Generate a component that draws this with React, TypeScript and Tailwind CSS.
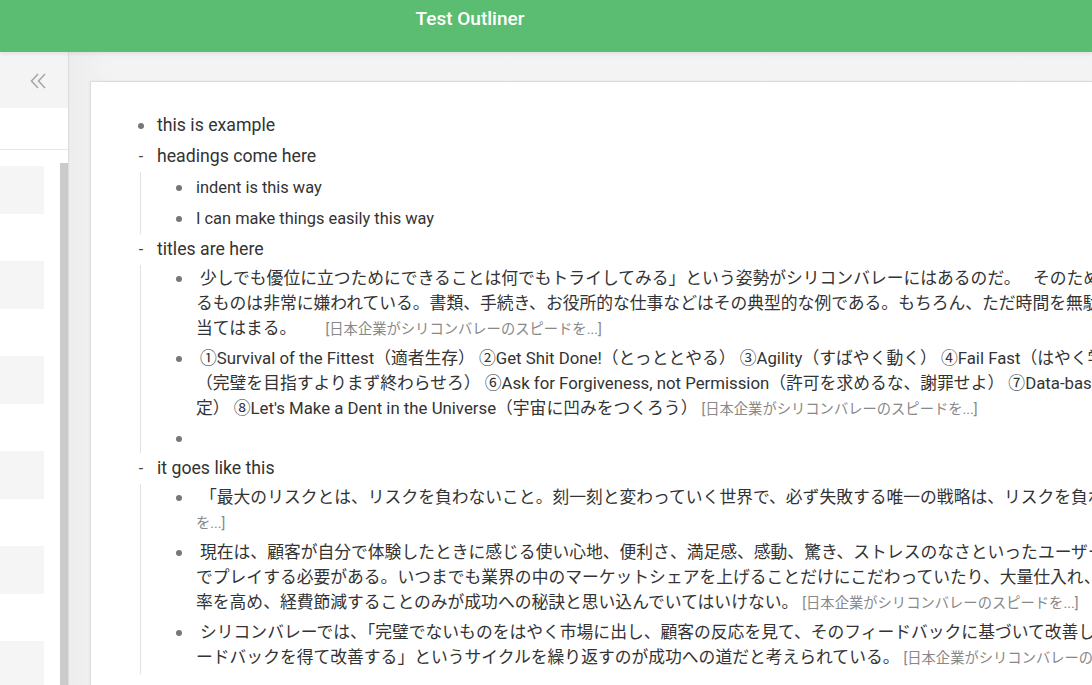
import React from "react";

const font = "font-['Roboto','Noto_Sans_CJK_JP',sans-serif]";

const Source = ({ children }: { children: React.ReactNode }) => (
  <span className="ml-[4px] text-[14.3px] leading-none text-[#888]">{children}</span>
);

const Dot = () => (
  <span className="w-[18px] h-[25px] flex items-center justify-center shrink-0">
    <span className="w-[6px] h-[6px] rounded-full bg-[#777]" />
  </span>
);

const Dash = () => (
  <span className="w-[18px] h-[25px] flex items-center justify-center shrink-0 text-[16px] text-[#444]">
    -
  </span>
);

const Top = ({ dash, text }: { dash?: boolean; text: string }) => (
  <div className="flex py-[3px]">
    {dash ? <Dash /> : <Dot />}
    <div className="ml-[7px] text-[17.7px] leading-[25px] text-[#333]">{text}</div>
  </div>
);

const Child = ({ children, jp }: { children?: React.ReactNode; jp?: boolean }) => {
  // empty item is a bit shorter than one with text
  const pad = jp ? "pt-[1px] pb-[4px]" : children ? "py-[3px]" : "py-[1.5px]";
  return (
    <div className={`flex ${pad}`}>
      <Dot />
      <div
        className={`ml-[8px] leading-[25px] text-[#333] whitespace-nowrap ${
          jp ? "text-[16.8px] indent-[4px]" : "text-[16.4px]"
        }`}
      >
        {children}
      </div>
    </div>
  );
};

const Group = ({ children }: { children: React.ReactNode }) => (
  <div className="ml-[8px] pl-[29px] border-l border-[#e2e2e2]">{children}</div>
);

export default function App() {
  return (
    <div className={`${font} w-screen h-screen overflow-hidden flex flex-col bg-[#f2f2f2]`}>
      {/* Header */}
      <header className="h-[52px] shrink-0 bg-[#5bbd71] flex justify-center pr-[152px] relative z-10 shadow-[0_2px_4px_rgba(0,0,0,0.08)]">
        <h1 className="text-white text-[19px] font-medium leading-[38px]">Test Outliner</h1>
      </header>

      <div className="flex flex-1 min-h-0">
        {/* Sidebar */}
        <aside className="w-[69px] shrink-0 bg-white border-r border-[#dcdcdc] flex flex-col">
          <div className="h-[56px] shrink-0 bg-[#f4f4f4] flex items-center justify-end pr-[22px] pt-[2px]">
            <svg width="16" height="18" viewBox="0 0 16 18" fill="none" stroke="#a8a8a8" strokeWidth="1.6">
              <polyline points="8,2 1.5,9 8,16" />
              <polyline points="15,2 8.5,9 15,16" />
            </svg>
          </div>
          <div className="h-[42px] shrink-0 border-b border-[#e6e6e6]" />
          <div className="flex-1 flex pt-[13px]">
            <div className="w-[44px] flex flex-col gap-[47px] pt-[3px]">
              {[0, 1, 2, 3, 4, 5].map((i) => (
                <div key={i} className="h-[48px] shrink-0 bg-[#f5f5f5]" />
              ))}
            </div>
            <div className="ml-auto w-[8px] bg-[#cbcbcb]" />
          </div>
        </aside>

        {/* Main */}
        <main className="flex-1 min-w-0 pl-[21px] pt-[29px] bg-gradient-to-r from-[#ededed] via-[#f3f3f3] via-[4%] to-[#f3f3f3]">
          <div className="h-full bg-white border-l border-t border-[#dcdcdc] shadow-[0_0_3px_rgba(0,0,0,0.06)] pl-[41px] pt-[28px]">
            <Top text="this is example" />
            <Top dash text="headings come here" />
            <Group>
              <Child>indent is this way</Child>
              <Child>I can make things easily this way</Child>
            </Group>
            <Top dash text="titles are here" />
            <Group>
              <Child jp>
                少しでも優位に立つためにできることは何でもトライしてみる」という姿勢がシリコンバレーにはあるのだ。　 そのため、スピードを遅くす
                <br />
                るものは非常に嫌われている。書類、手続き、お役所的な仕事などはその典型的な例である。もちろん、ただ時間を無駄遣いする会議も
                <br />
                当てはまる。　　<Source>[日本企業がシリコンバレーのスピードを...]</Source>
              </Child>
              <Child jp>
                ①Survival of the Fittest（適者生存） ②Get Shit Done!（とっととやる） ③Agility（すばやく動く） ④Fail Fast（はやく学べ）
                <br />
                （完璧を目指すよりまず終わらせろ） ⑥Ask for Forgiveness, not Permission（許可を求めるな、謝罪せよ） ⑦Data-based Decision（データに基づいて決
                <br />
                定） ⑧Let's Make a Dent in the Universe（宇宙に凹みをつくろう）<Source>[日本企業がシリコンバレーのスピードを...]</Source>
              </Child>
              <Child />
            </Group>
            <Top dash text="it goes like this" />
            <Group>
              <Child jp>
                「最大のリスクとは、リスクを負わないこと。刻一刻と変わっていく世界で、必ず失敗する唯一の戦略は、リスクを負わないことだ」
                <br />
                <span className="text-[14.3px] leading-none text-[#888]">を...]</span>
              </Child>
              <Child jp>
                現在は、顧客が自分で体験したときに感じる使い心地、便利さ、満足感、感動、驚き、ストレスのなさといったユーザー体験の領域
                <br />
                でプレイする必要がある。いつまでも業界の中のマーケットシェアを上げることだけにこだわっていたり、大量仕入れ、大量生産で効
                <br />
                率を高め、経費節減することのみが成功への秘訣と思い込んでいてはいけない。<Source>[日本企業がシリコンバレーのスピードを...]</Source>
              </Child>
              <Child jp>
                シリコンバレーでは、「完璧でないものをはやく市場に出し、顧客の反応を見て、そのフィードバックに基づいて改善し、さらにフィ
                <br />
                ードバックを得て改善する」というサイクルを繰り返すのが成功への道だと考えられている。<Source>[日本企業がシリコンバレーのスピードを...]</Source>
              </Child>
            </Group>
          </div>
        </main>
      </div>
    </div>
  );
}
